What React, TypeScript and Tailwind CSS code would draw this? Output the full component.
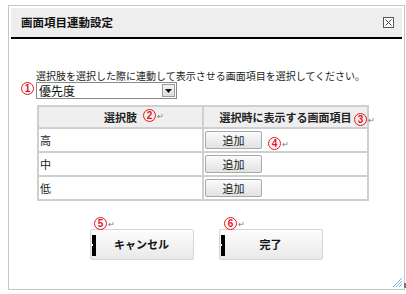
import React from 'react';

function Anno({ n, x, y, ret = true }: { n: string; x: number; y: number; ret?: boolean }) {
  return (
    <div className="absolute flex items-start pointer-events-none" style={{ left: x, top: y }}>
      <span className="w-[13px] h-[13px] rounded-full border-[1.5px] border-[#e8141c] text-[#e8141c] text-[10px] font-bold leading-none flex items-center justify-center font-['Liberation_Sans',sans-serif]">
        {n}
      </span>
      {ret && <span className="text-[8px] leading-none text-[#777] mt-[3px] ml-[1px]">↵</span>}
    </div>
  );
}

function AddButton() {
  return (
    <button className="w-[57px] h-[18px] border border-[#a9a9a9] rounded-[2px] bg-gradient-to-b from-[#fbfbfb] to-[#e2e2e2] text-[11px] leading-none text-[#222] flex items-center justify-center">
      追加
    </button>
  );
}

function BigButton({ label }: { label: string }) {
  return (
    <button className="relative w-[104px] h-[31px] border border-[#d6d6d6] rounded-[2px] bg-gradient-to-b from-[#fdfdfd] to-[#e9e9e9] text-[11px] font-bold text-[#111] flex items-center justify-center">
      <span className="absolute left-[1px] top-[5px] w-[4px] h-[21px] bg-black">
        <span className="absolute left-0 top-[9px] w-[1px] h-[2px] bg-white" />
      </span>
      {label}
    </button>
  );
}

export default function App() {
  const rows = ['高', '中', '低'];

  return (
    <div className="relative w-[406px] h-[294px] bg-white pl-[8px] pt-[5px] font-['Noto_Sans_CJK_JP',sans-serif] text-[#222]">
      <div className="relative w-[397px] h-[285px] border border-[#c6c6c6] p-[2px]">
        {/* Header */}
        <div className="h-[31px] bg-[#eeeeee] border-b-2 border-black flex items-center justify-between pl-[10px] pr-[8px]">
          <span className="text-[11.5px] font-bold leading-none text-[#111]">画面項目連動設定</span>
          <svg width="11" height="11" viewBox="0 0 11 11">
            <rect x="0.5" y="0.5" width="10" height="10" fill="#fff" stroke="#555" />
            <path d="M2.5 2.5 L8.5 8.5 M8.5 2.5 L2.5 8.5" stroke="#444" strokeWidth="1" />
          </svg>
        </div>

        <div className="pl-[25px]">
          <p className="mt-[31px] text-[10px] leading-[12px] text-[#222]">
            選択肢を選択した際に連動して表示させる画面項目を選択してください。
          </p>

          {/* Select */}
          <div className="w-[141px] h-[17px] border border-[#8a8a8a] flex items-center justify-between bg-white">
            <span className="text-[12px] leading-none pl-[2px] text-[#111]">優先度</span>
            <span className="w-[13px] h-[13px] mr-[1px] border border-[#9a9a9a] bg-gradient-to-b from-[#f4f4f4] to-[#dcdcdc] flex items-center justify-center">
              <svg width="7" height="4" viewBox="0 0 7 4">
                <path d="M0 0 L7 0 L3.5 4 Z" fill="#111" />
              </svg>
            </span>
          </div>

          {/* Table */}
          <table className="mt-[6px] ml-[1px] w-[332px] border-collapse border-2 border-[#cfcfcf] text-[11px]">
            <thead>
              <tr className="h-[22px] bg-[#efefef]">
                <th className="w-[165px] border-2 border-[#cfcfcf] font-bold text-center text-[11px] leading-none">選択肢</th>
                <th className="border-2 border-[#cfcfcf] font-bold text-center text-[11px] leading-none">選択時に表示する画面項目</th>
              </tr>
            </thead>
            <tbody>
              {rows.map((r) => (
                <tr key={r} className="h-[24px]">
                  <td className="border-2 border-[#cfcfcf] pl-[1px] leading-none">{r}</td>
                  <td className="border-2 border-[#cfcfcf] pl-[1px]">
                    <AddButton />
                  </td>
                </tr>
              ))}
            </tbody>
          </table>
        </div>

        {/* Footer buttons */}
        <div className="mt-[28px] flex justify-center gap-[25px] pr-[1px]">
          <BigButton label="キャンセル" />
          <BigButton label="完了" />
        </div>

        {/* Resize grip */}
        <svg className="absolute right-[1px] bottom-[1px]" width="11" height="11" viewBox="0 0 11 11">
          <path d="M1 10 L10 1 M4 10 L10 4 M7 10 L10 7" stroke="#6fb5ec" strokeWidth="1" />
        </svg>
      </div>
      <span className="absolute left-[404px] top-[283px] w-[2px] h-[5px] bg-[#777]" />

      <Anno n="1" x={21} y={82} ret={false} />
      <Anno n="2" x={143} y={109} />
      <Anno n="3" x={354} y={113} />
      <Anno n="4" x={268} y={137} />
      <Anno n="5" x={94} y={217} />
      <Anno n="6" x={224} y={217} />
    </div>
  );
}
